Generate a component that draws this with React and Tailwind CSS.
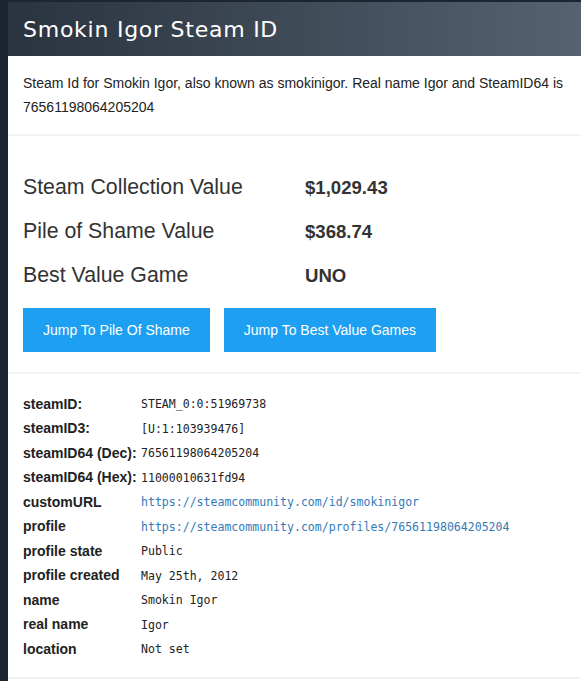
export default function App() {
  const rows = [
    { label: 'steamID:', value: 'STEAM_0:0:51969738' },
    { label: 'steamID3:', value: '[U:1:103939476]' },
    { label: 'steamID64 (Dec):', value: '76561198064205204' },
    { label: 'steamID64 (Hex):', value: '11000010631fd94' },
    { label: 'customURL', value: 'https://steamcommunity.com/id/smokinigor', link: true },
    { label: 'profile', value: 'https://steamcommunity.com/profiles/76561198064205204', link: true },
    { label: 'profile state', value: 'Public' },
    { label: 'profile created', value: 'May 25th, 2012' },
    { label: 'name', value: 'Smokin Igor' },
    { label: 'real name', value: 'Igor' },
    { label: 'location', value: 'Not set' },
  ];

  const stats = [
    { label: 'Steam Collection Value', value: '$1,029.43' },
    { label: 'Pile of Shame Value', value: '$368.74' },
    { label: 'Best Value Game', value: 'UNO' },
  ];

  return (
    <div className="h-[681px] w-[581px] overflow-hidden bg-[#1c2532] pt-[2px] pl-[8px] flex flex-col font-['Liberation_Sans',Arial,sans-serif] text-[#333]">
      <div className="w-[573px] flex-1 bg-white">
        {/* Header */}
        <div className="h-[54px] flex items-center px-[15px] bg-gradient-to-r from-[#2a3440] to-[#566270]">
          <h1 className="text-[22px] tracking-[0.75px] text-white font-['DejaVu_Sans',sans-serif]">Smokin Igor Steam ID</h1>
        </div>

        {/* Intro */}
        <div className="px-[15px] py-[15px] border-b-2 border-[#f2f2f2]">
          <p className="text-[14px] leading-[24px] text-[#222]">
            Steam Id for Smokin Igor, also known as smokinigor. Real name Igor and SteamID64 is 76561198064205204
          </p>
        </div>

        {/* Values */}
        <div className="px-[15px] pt-[30px] pb-[20px] border-b-2 border-[#f2f2f2]">
          {stats.map(s => (
            <div key={s.label} className="flex items-center h-[44px]">
              <div className="w-[282px] text-[21.3px]">{s.label}</div>
              <div className="text-[18.6px] font-bold">{s.value}</div>
            </div>
          ))}
          <div className="flex gap-[14px] mt-[10px]">
            <button className="h-[44px] px-[20px] bg-[#1ea0f2] text-white text-[14px]">Jump To Pile Of Shame</button>
            <button className="h-[44px] px-[20px] bg-[#1ea0f2] text-white text-[14px]">Jump To Best Value Games</button>
          </div>
        </div>

        {/* Ids */}
        <div className="px-[15px] pt-[18px] pb-[15px] border-b-2 border-[#f2f2f2]">
          {rows.map(r => (
            <div key={r.label} className="grid grid-cols-[118px_1fr] items-center h-[24.5px]">
              <div className="text-[14px] font-bold text-[#222]">{r.label}</div>
              <div className={`text-[11.55px] pt-[1px] font-['DejaVu_Sans_Mono',monospace] ${r.link ? 'text-[#337ab7]' : 'text-[#222]'}`}>
                {r.value}
              </div>
            </div>
          ))}
        </div>
      </div>
    </div>
  );
}
